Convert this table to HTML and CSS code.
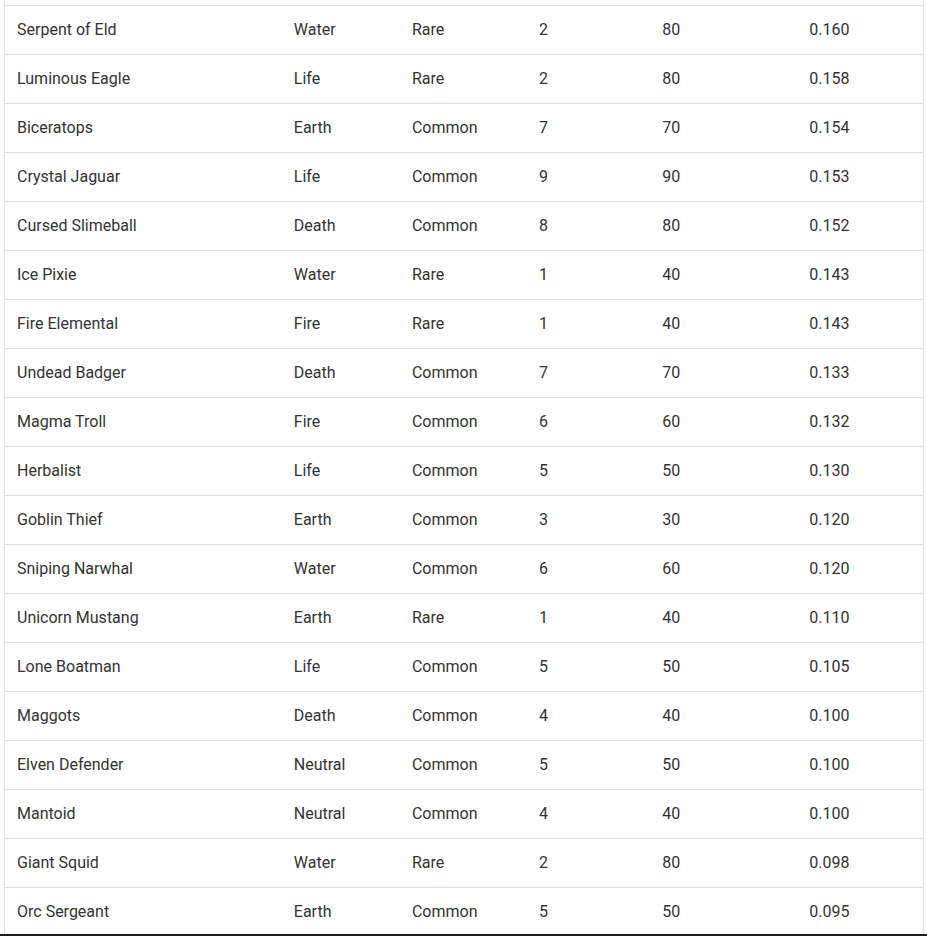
FILE: index.html
```html
<!DOCTYPE html>
<html>
<head>
<meta charset="utf-8">
<link rel="stylesheet" href="styles.css">
</head>
<body>
<div class="wrap">
<table class="cards">
<colgroup>
<col class="c-name"><col class="c-el"><col class="c-rar"><col class="c-lvl"><col class="c-pow"><col class="c-ratio">
</colgroup>
<tbody>
<tr class="stub"><td></td><td></td><td></td><td></td><td></td><td></td></tr>
<tr><td>Serpent of Eld</td><td>Water</td><td>Rare</td><td>2</td><td>80</td><td>0.160</td></tr>
<tr><td>Luminous Eagle</td><td>Life</td><td>Rare</td><td>2</td><td>80</td><td>0.158</td></tr>
<tr><td>Biceratops</td><td>Earth</td><td>Common</td><td>7</td><td>70</td><td>0.154</td></tr>
<tr><td>Crystal Jaguar</td><td>Life</td><td>Common</td><td>9</td><td>90</td><td>0.153</td></tr>
<tr><td>Cursed Slimeball</td><td>Death</td><td>Common</td><td>8</td><td>80</td><td>0.152</td></tr>
<tr><td>Ice Pixie</td><td>Water</td><td>Rare</td><td>1</td><td>40</td><td>0.143</td></tr>
<tr><td>Fire Elemental</td><td>Fire</td><td>Rare</td><td>1</td><td>40</td><td>0.143</td></tr>
<tr><td>Undead Badger</td><td>Death</td><td>Common</td><td>7</td><td>70</td><td>0.133</td></tr>
<tr><td>Magma Troll</td><td>Fire</td><td>Common</td><td>6</td><td>60</td><td>0.132</td></tr>
<tr><td>Herbalist</td><td>Life</td><td>Common</td><td>5</td><td>50</td><td>0.130</td></tr>
<tr><td>Goblin Thief</td><td>Earth</td><td>Common</td><td>3</td><td>30</td><td>0.120</td></tr>
<tr><td>Sniping Narwhal</td><td>Water</td><td>Common</td><td>6</td><td>60</td><td>0.120</td></tr>
<tr><td>Unicorn Mustang</td><td>Earth</td><td>Rare</td><td>1</td><td>40</td><td>0.110</td></tr>
<tr><td>Lone Boatman</td><td>Life</td><td>Common</td><td>5</td><td>50</td><td>0.105</td></tr>
<tr><td>Maggots</td><td>Death</td><td>Common</td><td>4</td><td>40</td><td>0.100</td></tr>
<tr><td>Elven Defender</td><td>Neutral</td><td>Common</td><td>5</td><td>50</td><td>0.100</td></tr>
<tr><td>Mantoid</td><td>Neutral</td><td>Common</td><td>4</td><td>40</td><td>0.100</td></tr>
<tr><td>Giant Squid</td><td>Water</td><td>Rare</td><td>2</td><td>80</td><td>0.098</td></tr>
<tr><td>Orc Sergeant</td><td>Earth</td><td>Common</td><td>5</td><td>50</td><td>0.095</td></tr>
</tbody>
</table>
</div>
<div class="bottom-bar"></div>
</body>
</html>
```
FILE: styles.css
```css
html, body {
  margin: 0;
  padding: 0;
  background: #fff;
  overflow: hidden;
}
body {
  font-family: Roboto, "Liberation Sans", sans-serif;
  font-size: 16px;
  color: #333;
}
.wrap {
  padding-left: 4px;
}
.cards {
  width: 920px;
  border-collapse: collapse;
  table-layout: fixed;
  border-left: 1px solid #e0e0e0;
  border-right: 1px solid #e0e0e0;
}
.c-name { width: 277px; }
.c-el { width: 118px; }
.c-rar { width: 127px; }
.c-lvl { width: 123px; }
.c-pow { width: 147px; }
.c-ratio { width: 126px; }
.cards td {
  height: 46px;
  padding: 0 12px 2px;
  border-bottom: 1px solid #e0e0e0;
  text-align: left;
  vertical-align: middle;
  white-space: nowrap;
}
.cards tr.stub td {
  height: 5px;
  padding: 0;
}
.bottom-bar {
  position: fixed;
  left: 0;
  right: 0;
  bottom: 0;
  height: 2px;
  background: #1e1e1e;
}
```
